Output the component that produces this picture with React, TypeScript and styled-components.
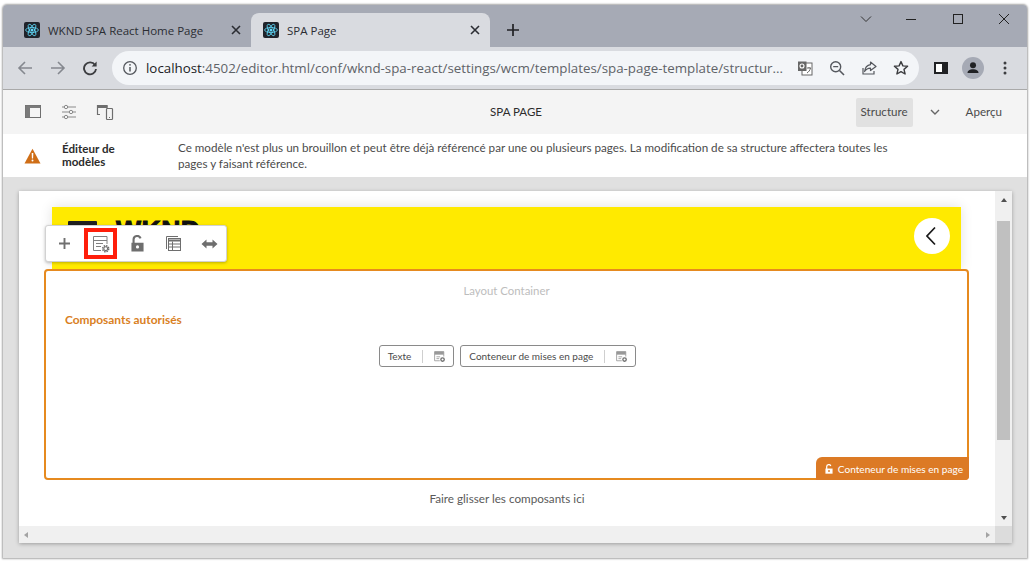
import React from 'react';
import styled, { createGlobalStyle } from 'styled-components';

const GlobalStyle = createGlobalStyle`
  html, body {
    margin: 0;
    padding: 0;
    background: #fff;
    font-family: "Open Sans", "Noto Sans", "Liberation Sans", sans-serif;
    overflow: hidden;
  }
`;

const Page = styled.div`
  width: 1032px;
  height: 564px;
  box-sizing: border-box;
  padding: 5px 5px 6px 3px;
`;

const Window = styled.div`
  height: 100%;
  display: flex;
  flex-direction: column;
  border-radius: 4px 4px 0 0;
  overflow: hidden;
  background: #e0e0e0;
  box-shadow: 0 0 2px 1px rgba(0, 0, 0, 0.35);
`;

// Browser chrome
const TabStrip = styled.div`
  height: 42px;
  flex: none;
  background: #a6aab5;
  display: flex;
  align-items: flex-end;
  padding-left: 9px;
`;

const Tab = styled.div<{ $active?: boolean }>`
  width: 239px;
  height: 34px;
  box-sizing: border-box;
  padding: 0 10px 0 12px;
  display: flex;
  align-items: center;
  gap: 8px;
  border-radius: 8px 8px 0 0;
  background: ${p => (p.$active ? '#d9dbe0' : 'transparent')};
  font-size: 11.5px;
  color: #2b2d33;
`;

const TabTitle = styled.span`
  flex: 1;
  white-space: nowrap;
`;

const Favicon = styled.svg`
  width: 16px;
  height: 16px;
  flex: none;
`;

const NewTab = styled.div`
  width: 46px;
  height: 34px;
  display: flex;
  align-items: center;
  justify-content: center;
`;

const WindowControls = styled.div`
  margin-left: auto;
  align-self: flex-start;
  display: flex;
  height: 28px;
  align-items: center;
  padding-right: 17px;
  gap: 31px;
`;

const AddressRow = styled.div`
  height: 43px;
  flex: none;
  box-sizing: border-box;
  background: #d9dbe0;
  border-bottom: 1px solid #a9a9a9;
  display: flex;
  align-items: center;
  padding: 0 15px 1px 14px;
`;

const NavButtons = styled.div`
  display: flex;
  align-items: center;
  gap: 16.5px;
  width: 95px;
`;

const Omnibox = styled.div`
  width: 807px;
  height: 34px;
  flex: none;
  box-sizing: border-box;
  border-radius: 17px;
  background: #f3f5f8;
  display: flex;
  align-items: center;
  padding: 0 10px 0 10px;
`;

const Url = styled.div`
  flex: 1;
  margin-left: 8px;
  font-size: 13.33px;
  color: #5f6368;
  white-space: nowrap;
  overflow: hidden;
`;

const Host = styled.span`
  color: #202124;
`;

const OmniIcons = styled.div`
  display: flex;
  align-items: center;
  gap: 16px;
`;

const ProfileIcons = styled.div`
  margin-left: auto;
  display: flex;
  align-items: center;
  gap: 14px;
`;

const Avatar = styled.div`
  width: 22px;
  height: 22px;
  border-radius: 50%;
  background: #a6aab5;
  display: flex;
  align-items: center;
  justify-content: center;
`;

// AEM editor
const Editor = styled.div`
  flex: 1;
  min-height: 0;
  display: flex;
  flex-direction: column;
  font-family: Lato, "Open Sans", sans-serif;
`;

const EditorBar = styled.div`
  height: 44px;
  flex: none;
  background: #f4f4f4;
  display: grid;
  grid-template-columns: 1fr auto 1fr;
  align-items: center;
  padding: 0 25px 0 21px;
`;

const EditorLeft = styled.div`
  display: flex;
  align-items: center;
  gap: 18px;
`;

const PageTitle = styled.div`
  font-size: 11.5px;
  color: #2c2c2c;
  margin-left: 6px;
  padding-bottom: 2px;
`;

const EditorRight = styled.div`
  display: flex;
  align-items: center;
  justify-content: flex-end;
  font-size: 11.6px;
  color: #4b4b4b;
`;

const ModeButton = styled.div`
  width: 57px;
  height: 29px;
  box-sizing: border-box;
  padding-bottom: 2px;
  border-radius: 2px;
  background: #e1e1e1;
  display: flex;
  align-items: center;
  justify-content: center;
`;

const ModeCaret = styled.div`
  width: 44px;
  display: flex;
  justify-content: center;
  margin-right: 9px;
`;

const ModeLink = styled.span`
  padding-bottom: 2px;
`;

const AlertBar = styled.div`
  height: 43px;
  flex: none;
  box-sizing: border-box;
  background: #fff;
  display: grid;
  grid-template-columns: 38px 116px 1fr;
  align-items: center;
  padding-left: 21px;
`;

const AlertTitle = styled.div`
  font-size: 11.6px;
  font-weight: 700;
  line-height: 13px;
  padding-bottom: 2px;
  color: #2c2c2c;
`;

const AlertText = styled.div`
  max-width: 722px;
  padding-top: 1px;
  font-size: 11.65px;
  line-height: 15.6px;
  color: #4b4b4b;
`;

const Canvas = styled.div`
  flex: 1;
  min-height: 0;
  padding: 14px 15px 15px 16px;
  display: flex;
`;

const Frame = styled.div`
  flex: 1;
  display: grid;
  grid-template-columns: 1fr 17px;
  grid-template-rows: 1fr 17px;
  background: #fff;
  box-shadow: 0 1px 4px rgba(0, 0, 0, 0.3);
`;

const Viewport = styled.div`
  position: relative;
  overflow: hidden;
  padding-top: 16px;
`;

const Hero = styled.div`
  height: 62px;
  margin: 0 34px 0 33px;
  box-sizing: border-box;
  padding: 11px 11px 0 16px;
  background: #ffea00;
  display: flex;
  align-items: flex-start;
  box-shadow: 0 0 12px rgba(0, 0, 0, 0.12);
`;

const Burger = styled.div`
  width: 29px;
  height: 6px;
  margin-top: 3px;
  background: #202020;
  border-radius: 1px;
`;

const Logo = styled.div`
  margin-left: 19px;
  font-family: "Liberation Sans", sans-serif;
  font-size: 26.5px;
  font-weight: 700;
  line-height: 24px;
  letter-spacing: 0.5px;
  color: #111;
  -webkit-text-stroke: 1px #111;
`;

const BackCircle = styled.div`
  margin-left: auto;
  width: 36px;
  height: 36px;
  border-radius: 50%;
  background: #fff;
  display: flex;
  align-items: center;
  justify-content: center;
`;

const Container = styled.div`
  position: relative;
  height: 211px;
  margin: 0 26px 0 25px;
  box-sizing: border-box;
  background: #fff;
  border: 2px solid #e68a1f;
  border-radius: 4px;
  padding: 13px 19px 0;
`;

const ContainerLabel = styled.div`
  text-align: center;
  font-size: 11.4px;
  line-height: 14px;
  color: #bdbdbd;
`;

const AllowedTitle = styled.div`
  margin-top: 15px;
  font-size: 11.9px;
  font-weight: 700;
  line-height: 14px;
  color: #d9801f;
`;

const ChipRow = styled.div`
  display: flex;
  justify-content: center;
  gap: 6px;
  margin-top: 18px;
  padding-left: 2px;
`;

const Chip = styled.div`
  height: 22px;
  box-sizing: border-box;
  border: 1px solid #8a8a8a;
  border-radius: 3px;
  display: flex;
  align-items: center;
  padding: 0 8px;
  font-size: 10px;
  line-height: 18px;
  color: #4b4b4b;
`;

const ChipDivider = styled.span`
  width: 1px;
  height: 13px;
  margin: 0 11px 0 11px;
  background: #cfcfcf;
`;

const CornerTag = styled.div`
  position: absolute;
  right: -2px;
  bottom: -2px;
  height: 23px;
  padding: 0 6px 0 8px;
  display: flex;
  align-items: center;
  gap: 4px;
  border-radius: 6px 0 4px 0;
  background: #dc7a25;
  color: #fff;
  font-size: 10.1px;
  white-space: nowrap;
`;

const DropHint = styled.div`
  margin-top: 10px;
  text-align: center;
  font-size: 11.7px;
  line-height: 16px;
  color: #5a5a5a;
`;

const FloatingToolbar = styled.div`
  position: absolute;
  left: 26px;
  top: 34px;
  width: 182px;
  height: 37px;
  box-sizing: border-box;
  border-radius: 3px;
  background: #fff;
  border: 1px solid #d2d2d2;
  box-shadow: 0 1px 3px rgba(0, 0, 0, 0.25);
  display: flex;
  align-items: center;
`;

const ToolButton = styled.div<{ $marked?: boolean }>`
  width: 36px;
  height: 31px;
  flex: none;
  box-sizing: border-box;
  display: flex;
  align-items: center;
  justify-content: center;
  ${p => (p.$marked ? 'border: 4px solid #ff1e0a; width: 33px; margin: 0 2px 0 2px;' : '')}
`;

const ScrollTrackV = styled.div`
  background: #f0f0f0;
  display: flex;
  flex-direction: column;
  align-items: center;
`;

const ScrollThumb = styled.div`
  width: 13px;
  height: 219px;
  margin-top: 13px;
  background: #c0c0c0;
`;

const ScrollArrow = styled.div<{ $dir: 'up' | 'down' | 'left' | 'right' }>`
  width: 0;
  height: 0;
  border-style: solid;
  ${p => {
    if (p.$dir === 'up') return 'border-width: 0 3.5px 4px 3.5px; border-color: transparent transparent #505050 transparent;';
    if (p.$dir === 'down') return 'border-width: 4px 3.5px 0 3.5px; border-color: #505050 transparent transparent transparent;';
    if (p.$dir === 'left') return 'border-width: 3.5px 4px 3.5px 0; border-color: transparent #a3a3a3 transparent transparent;';
    return 'border-width: 3.5px 0 3.5px 4px; border-color: transparent transparent transparent #a3a3a3;';
  }}
`;

const ArrowSlot = styled.div<{ $push?: boolean }>`
  height: 17px;
  display: flex;
  align-items: center;
  justify-content: center;
  flex: none;
  ${p => (p.$push ? 'margin-top: auto;' : '')}
`;

const ScrollTrackH = styled.div`
  background: #f0f0f0;
  display: flex;
  align-items: center;
  justify-content: space-between;
  padding: 0 5px;
`;

const ScrollCorner = styled.div`
  background: #dcdcdc;
`;

// Icons
const ReactFavicon = () => (
  <Favicon viewBox="0 0 16 16">
    <rect width="16" height="16" rx="2" fill="#20232a" />
    <circle cx="8" cy="8" r="1.5" fill="#61dafb" />
    <g fill="none" stroke="#61dafb" strokeWidth="0.8">
      <ellipse cx="8" cy="8" rx="6.4" ry="2.5" />
      <ellipse cx="8" cy="8" rx="6.4" ry="2.5" transform="rotate(60 8 8)" />
      <ellipse cx="8" cy="8" rx="6.4" ry="2.5" transform="rotate(120 8 8)" />
    </g>
  </Favicon>
);

const CloseX = ({ size = 10, w = 1.6, color = '#2b2d33' }: { size?: number; w?: number; color?: string }) => (
  <svg width={size} height={size} viewBox="0 0 10 10">
    <path d="M1 1L9 9M9 1L1 9" stroke={color} strokeWidth={w} fill="none" />
  </svg>
);

const Gear = ({ color = '#6e6e6e' }: { color?: string }) => (
  <g>
    <circle cx="13.7" cy="13.7" r="3" stroke={color} strokeWidth="1.5" strokeDasharray="1.5 0.85" />
    <circle cx="13.7" cy="13.7" r="1.9" stroke={color} strokeWidth="1.1" />
  </g>
);

const TemplatePolicy = ({ size = 17 }: { size?: number }) => (
  <svg width={size} height={size} viewBox="0 0 18 18" fill="none">
    <path d="M9 15.5H1.5V1.5H15V9" stroke="#808080" strokeWidth="1" />
    <path d="M1.5 5.5H15M4 8.5H11M4 11.5H9" stroke="#808080" strokeWidth="1" />
    <Gear />
  </svg>
);

const ChipPolicy = () => (
  <svg width={11} height={11} viewBox="0 0 18 18" fill="none">
    <path d="M1 1H16V6H1Z" fill="#999" />
    <path d="M9.5 16H1V1H16V9" stroke="#999" strokeWidth="1.4" />
    <path d="M4 9.5H10M4 12.5H8.5" stroke="#999" strokeWidth="1.4" />
    <circle cx="14" cy="14" r="2.8" stroke="#707070" strokeWidth="2.2" />
  </svg>
);

const OpenLock = ({ color = '#6e6e6e', size = 16 }: { color?: string; size?: number }) => (
  <svg width={size} height={size} viewBox="0 0 16 16">
    <path d="M4.3 8V4.4a3.4 3.4 0 0 1 6.6-1.2" stroke={color} strokeWidth="2" fill="none" />
    <path d="M2.3 7.3h11.4V15.5H2.3z" fill={color} />
    <circle cx="8" cy="11.2" r="1.5" fill={color === '#fff' ? '#dc7a25' : '#fff'} />
  </svg>
);

const App: React.FC = () => (
  <Page>
    <GlobalStyle />
    <Window>
      <TabStrip>
        <Tab>
          <ReactFavicon />
          <TabTitle>WKND SPA React Home Page</TabTitle>
          <CloseX />
        </Tab>
        <Tab $active>
          <ReactFavicon />
          <TabTitle>SPA Page</TabTitle>
          <CloseX />
        </Tab>
        <NewTab>
          <svg width="12" height="12" viewBox="0 0 12 12">
            <path d="M6 0V12M0 6H12" stroke="#202124" strokeWidth="1.7" />
          </svg>
        </NewTab>
        <WindowControls>
          <svg width="12" height="12" viewBox="0 0 12 12" style={{ marginRight: 2 }}>
            <path d="M1 3.5L6 8.5L11 3.5" stroke="#333" strokeWidth="1" fill="none" />
          </svg>
          <svg width="12" height="12" viewBox="0 0 12 12">
            <path d="M1 6.5H11" stroke="#222" strokeWidth="1" />
          </svg>
          <svg width="12" height="12" viewBox="0 0 12 12" style={{ marginLeft: 4 }}>
            <rect x="1.5" y="1.5" width="9" height="9" fill="none" stroke="#222" strokeWidth="1" />
          </svg>
          <svg width="12" height="12" viewBox="0 0 12 12" style={{ marginLeft: 3 }}>
            <path d="M1 1L11 11M11 1L1 11" stroke="#222" strokeWidth="1" />
          </svg>
        </WindowControls>
      </TabStrip>

      <AddressRow>
        <NavButtons>
          <svg width="16" height="16" viewBox="0 0 16 16" fill="none">
            <path d="M15 8H2M8 2L2 8L8 14" stroke="#85888f" strokeWidth="1.6" />
          </svg>
          <svg width="16" height="16" viewBox="0 0 16 16" fill="none">
            <path d="M1 8H14M8 2L14 8L8 14" stroke="#85888f" strokeWidth="1.6" />
          </svg>
          <svg width="16" height="16" viewBox="0 0 16 16" fill="none">
            <path d="M13 5A6 6 0 1 0 14 9" stroke="#3c3d40" strokeWidth="1.9" />
            <path d="M14.6 1.4V6.4H9.6Z" fill="#3c3d40" />
          </svg>
        </NavButtons>
        <Omnibox>
          <svg width="16" height="16" viewBox="0 0 16 16" fill="none">
            <circle cx="8" cy="8" r="6.3" stroke="#55585e" strokeWidth="1.3" />
            <path d="M8 7V11.5" stroke="#55585e" strokeWidth="1.5" />
            <circle cx="8" cy="4.8" r="0.9" fill="#55585e" />
          </svg>
          <Url>
            <Host>localhost</Host>:4502/editor.html/conf/wknd-spa-react/settings/wcm/templates/spa-page-template/structur...
          </Url>
          <OmniIcons>
            <svg width="16" height="16" viewBox="0 0 16 16">
              <rect x="5" y="3" width="10" height="12" fill="#fff" stroke="#666" />
              <rect x="1" y="1.5" width="8.5" height="9.5" fill="#666" />
              <circle cx="5" cy="6" r="2" fill="none" stroke="#fff" strokeWidth="1.1" />
              <path d="M10 8H14M12 7V8M13.5 8C13 10.5 11.5 12 10 13" stroke="#666" fill="none" />
            </svg>
            <svg width="16" height="16" viewBox="0 0 16 16" fill="none">
              <circle cx="6.7" cy="6.7" r="5" stroke="#55585e" strokeWidth="1.4" />
              <path d="M10.5 10.5L15 15" stroke="#55585e" strokeWidth="1.6" />
              <path d="M4.2 6.7H9.2" stroke="#55585e" strokeWidth="1.3" />
            </svg>
            <svg width="16" height="16" viewBox="0 0 16 16" fill="none">
              <path d="M2 8V14H13V11" stroke="#55585e" strokeWidth="1.2" />
              <path d="M9.5 2L15 6.5L9.5 10.5V8.2C7 8.2 5 9.3 3.6 11.5C4 7.8 6 5.2 9.5 4.7Z" stroke="#55585e" strokeWidth="1.2" strokeLinejoin="round" />
            </svg>
            <svg width="16" height="16" viewBox="0 0 16 16" fill="none">
              <path d="M8 1.6L9.9 5.9L14.6 6.3L11 9.4L12.1 14L8 11.6L3.9 14L5 9.4L1.4 6.3L6.1 5.9Z" stroke="#3c3d40" strokeWidth="1.4" strokeLinejoin="round" />
            </svg>
          </OmniIcons>
        </Omnibox>
        <ProfileIcons>
          <svg width="14" height="12" viewBox="0 0 14 12">
            <rect x="1" y="1" width="12" height="10" fill="#fff" stroke="#202124" strokeWidth="2" />
            <rect x="8" y="1" width="5" height="10" fill="#202124" />
          </svg>
          <Avatar>
            <svg width="14" height="14" viewBox="0 0 14 14" fill="#202124">
              <circle cx="7" cy="4.3" r="3" />
              <path d="M1.5 12C1.5 9.5 4 8.3 7 8.3S12.5 9.5 12.5 12Z" />
            </svg>
          </Avatar>
          <svg width="14" height="14" viewBox="0 0 14 14" fill="#3c3d40">
            <circle cx="7" cy="2" r="1.5" />
            <circle cx="7" cy="7" r="1.5" />
            <circle cx="7" cy="12" r="1.5" />
          </svg>
        </ProfileIcons>
      </AddressRow>

      <Editor>
        <EditorBar>
          <EditorLeft>
            <svg width="18" height="18" viewBox="0 0 18 18">
              <rect x="1.5" y="2.5" width="15" height="12" fill="none" stroke="#6e6e6e" />
              <path d="M1.5 2.5H16.5V5H1.5ZM1.5 5H6V14.5H1.5Z" fill="#7a7a7a" />
            </svg>
            <svg width="18" height="18" viewBox="0 0 18 18" fill="#f4f4f4" stroke="#8a8a8a">
              <path d="M2 4H16M2 9H16M2 14H16" />
              <circle cx="6" cy="4" r="1.7" />
              <circle cx="11" cy="9" r="1.7" />
              <circle cx="6" cy="14" r="1.7" />
            </svg>
            <svg width="18" height="18" viewBox="0 0 18 18" fill="none" stroke="#6e6e6e">
              <path d="M4 11.5H1.5V2.5H11V5" strokeWidth="1.2" />
              <path d="M1.5 2.5H11V4.5H1.5Z" fill="#6e6e6e" />
              <rect x="10.5" y="5.5" width="6" height="11" rx="0.8" strokeWidth="1.2" />
              <path d="M13 14.5H14" strokeWidth="1" />
            </svg>
          </EditorLeft>
          <PageTitle>SPA PAGE</PageTitle>
          <EditorRight>
            <ModeButton>Structure</ModeButton>
            <ModeCaret>
              <svg width="10" height="10" viewBox="0 0 10 10">
                <path d="M1 3L5 7L9 3" stroke="#666" strokeWidth="1.4" fill="none" />
              </svg>
            </ModeCaret>
            <ModeLink>Aperçu</ModeLink>
          </EditorRight>
        </EditorBar>

        <AlertBar>
          <svg width="17" height="16" viewBox="0 0 17 16" style={{ marginTop: 1 }}>
            <path d="M8.5 0.8L16.5 15.5H0.5Z" fill="#cf6e17" />
            <path d="M7.7 5H9.3L9.1 10.5H7.9Z" fill="#fff" />
            <circle cx="8.5" cy="12.5" r="1" fill="#fff" />
          </svg>
          <AlertTitle>
            Éditeur de
            <br />
            modèles
          </AlertTitle>
          <AlertText>
            Ce modèle n'est plus un brouillon et peut être déjà référencé par une ou plusieurs pages. La modification de sa structure affectera toutes les pages y faisant référence.
          </AlertText>
        </AlertBar>

        <Canvas>
          <Frame>
            <Viewport>
              <Hero>
                <Burger />
                <Logo>WKND</Logo>
                <BackCircle>
                  <svg width="12" height="20" viewBox="0 0 12 20">
                    <path d="M9 1.5L1 10L9 18.5" stroke="#1a1a1a" strokeWidth="1.7" fill="none" />
                  </svg>
                </BackCircle>
              </Hero>
              <Container>
                <ContainerLabel>Layout Container</ContainerLabel>
                <AllowedTitle>Composants autorisés</AllowedTitle>
                <ChipRow>
                  <Chip>
                    Texte
                    <ChipDivider />
                    <ChipPolicy />
                  </Chip>
                  <Chip>
                    Conteneur de mises en page
                    <ChipDivider />
                    <ChipPolicy />
                  </Chip>
                </ChipRow>
                <CornerTag>
                  <OpenLock color="#fff" size={10} />
                  Conteneur de mises en page
                </CornerTag>
              </Container>
              <DropHint>Faire glisser les composants ici</DropHint>
              <FloatingToolbar>
                <ToolButton>
                  <svg width="13" height="13" viewBox="0 0 13 13">
                    <path d="M6.5 1V12M1 6.5H12" stroke="#707070" strokeWidth="1.9" />
                  </svg>
                </ToolButton>
                <ToolButton $marked>
                  <TemplatePolicy size={18} />
                </ToolButton>
                <ToolButton>
                  <OpenLock size={17} />
                </ToolButton>
                <ToolButton>
                  <svg width="17" height="17" viewBox="0 0 17 17" fill="none" stroke="#6e6e6e">
                    <path d="M1.5 14V1.5H13" strokeWidth="1" />
                    <rect x="3.5" y="3.5" width="12" height="12" strokeWidth="1" />
                    <path d="M3.5 5.5H15.5" strokeWidth="2" />
                    <path d="M3.5 9H15.5M3.5 12H15.5M7.5 6.5V15.5" strokeWidth="1" />
                  </svg>
                </ToolButton>
                <ToolButton>
                  <svg width="17" height="10" viewBox="0 0 17 10" fill="#6e6e6e">
                    <path d="M0.5 5L5.5 0.5V3.3H11.5V0.5L16.5 5L11.5 9.5V6.7H5.5V9.5Z" />
                  </svg>
                </ToolButton>
              </FloatingToolbar>
            </Viewport>
            <ScrollTrackV>
              <ArrowSlot><ScrollArrow $dir="up" /></ArrowSlot>
              <ScrollThumb />
              <ArrowSlot $push><ScrollArrow $dir="down" /></ArrowSlot>
            </ScrollTrackV>
            <ScrollTrackH>
              <ScrollArrow $dir="left" />
              <ScrollArrow $dir="right" />
            </ScrollTrackH>
            <ScrollCorner />
          </Frame>
        </Canvas>
      </Editor>
    </Window>
  </Page>
);

export default App;
